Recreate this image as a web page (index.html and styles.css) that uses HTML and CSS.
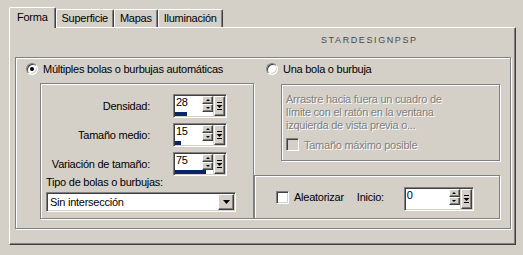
FILE: index.html
```html
<!DOCTYPE html>
<html lang="es">
<head>
    <meta charset="UTF-8">
    <title>Burbujas - Forma</title>
    <link rel="stylesheet" href="styles.css">
</head>
<body>
    <div class="dialog">
        <div class="tabs">
            <div class="tab active">Forma</div>
            <div class="tab">Superficie</div>
            <div class="tab">Mapas</div>
            <div class="tab">Iluminación</div>
        </div>

        <div class="panel">
            <div class="brand">STARDESIGNPSP</div>

            <div class="frame">
                <label class="radio r-multi"><span class="radio-dot on"></span>Múltiples bolas o burbujas automáticas</label>
                <label class="radio r-single"><span class="radio-dot"></span>Una bola o burbuja</label>

                <!-- Multiple bubbles -->
                <div class="group g-multi">
                    <div class="field-row">
                        <span class="lbl">Densidad:</span>
                        <div class="spin">
                            <div class="spin-main">
                                <div class="spin-top">
                                    <span class="spin-value">28</span>
                                    <span class="spin-arrows"><span class="btn"><i class="arr-up"></i></span><span class="btn"><i class="arr-down"></i></span></span>
                                </div>
                                <div class="spin-bar"><span style="width: 32%"></span></div>
                            </div>
                            <span class="btn spin-pop"><svg width="7" height="9" viewBox="0 0 7 9"><rect x="1" y="0" width="5" height="1"/><path d="M0.5 3h6l-3 3z"/><rect x="1" y="7" width="5" height="1"/></svg></span>
                        </div>
                    </div>
                    <div class="field-row">
                        <span class="lbl">Tamaño medio:</span>
                        <div class="spin">
                            <div class="spin-main">
                                <div class="spin-top">
                                    <span class="spin-value">15</span>
                                    <span class="spin-arrows"><span class="btn"><i class="arr-up"></i></span><span class="btn"><i class="arr-down"></i></span></span>
                                </div>
                                <div class="spin-bar"><span style="width: 16%"></span></div>
                            </div>
                            <span class="btn spin-pop"><svg width="7" height="9" viewBox="0 0 7 9"><rect x="1" y="0" width="5" height="1"/><path d="M0.5 3h6l-3 3z"/><rect x="1" y="7" width="5" height="1"/></svg></span>
                        </div>
                    </div>
                    <div class="field-row last">
                        <span class="lbl">Variación de tamaño:</span>
                        <div class="spin">
                            <div class="spin-main">
                                <div class="spin-top">
                                    <span class="spin-value">75</span>
                                    <span class="spin-arrows"><span class="btn"><i class="arr-up"></i></span><span class="btn"><i class="arr-down"></i></span></span>
                                </div>
                                <div class="spin-bar"><span style="width: 82%"></span></div>
                            </div>
                            <span class="btn spin-pop"><svg width="7" height="9" viewBox="0 0 7 9"><rect x="1" y="0" width="5" height="1"/><path d="M0.5 3h6l-3 3z"/><rect x="1" y="7" width="5" height="1"/></svg></span>
                        </div>
                    </div>
                    <div class="sub-lbl">Tipo de bolas o burbujas:</div>
                    <div class="combo">
                        <span class="combo-text">Sin intersección</span>
                        <span class="btn combo-btn"><svg width="7" height="4" viewBox="0 0 7 4"><path d="M0 0h7l-3.5 4z"/></svg></span>
                    </div>
                </div>

                <!-- Single bubble (disabled) -->
                <div class="group g-single disabled">
                    <p>Arrastre hacia fuera un cuadro de<br>límite con el ratón en la ventana<br>izquierda de vista previa o...</p>
                    <label class="check"><span class="check-box"></span>Tamaño máximo posible</label>
                </div>

                <!-- Random seed -->
                <div class="group g-random">
                    <label class="check"><span class="check-box"></span>Aleatorizar</label>
                    <span class="seed-lbl">Inicio:</span>
                    <div class="spin wide">
                        <div class="spin-main">
                            <div class="spin-top">
                                <span class="spin-value">0</span>
                                <span class="spin-arrows"><span class="btn"><i class="arr-up"></i></span><span class="btn"><i class="arr-down"></i></span></span>
                            </div>
                            <div class="spin-bar"><span style="width: 0%"></span></div>
                        </div>
                        <span class="btn spin-pop"><svg width="7" height="9" viewBox="0 0 7 9"><rect x="1" y="0" width="5" height="1"/><path d="M0.5 3h6l-3 3z"/><rect x="1" y="7" width="5" height="1"/></svg></span>
                    </div>
                </div>
            </div>
        </div>
    </div>
</body>
</html>
```

FILE: styles.css
```css
/* Global */
body {
    margin: 0;
    background-color: #d4d0c8;
    color: #000;
    font-family: "Liberation Sans", Arial, sans-serif;
    font-size: 11px;
    letter-spacing: -0.25px;
}

.dialog {
    padding: 7px 7px 0 9px;
    height: 255px;
    box-sizing: border-box;
}

/* Raised 3D button */
.btn {
    display: flex;
    align-items: center;
    justify-content: center;
    background-color: #d4d0c8;
    border: 1px solid;
    border-color: #fff #404040 #404040 #fff;
    box-shadow: inset -1px -1px 0 #808080;
    box-sizing: border-box;
}

/* Tabs */
.tabs {
    display: flex;
    align-items: flex-end;
    height: 20px;
}

.tab {
    height: 18px;
    line-height: 17px;
    padding: 0 5px;
    border-top: 1px solid #fff;
    border-left: 1px solid #fff;
    border-right: 1px solid #404040;
    border-radius: 2px 2px 0 0;
    box-shadow: inset -1px 0 0 #808080;
    box-sizing: border-box;
    white-space: nowrap;
}

.tab.active {
    position: relative;
    z-index: 1;
    height: 21px;
    line-height: 18px;
    padding: 0 7px;
    margin-bottom: -1px;
    background-color: #d4d0c8;
}

/* Tab page */
.panel {
    height: 218px;
    padding: 0 4px 0 5px;
    border-top: 1px solid #fff;
    border-left: 1px solid #fff;
    border-right: 1px solid #404040;
    border-bottom: 1px solid #404040;
    box-shadow: inset -1px -1px 0 #808080;
    box-sizing: border-box;
}

.brand {
    height: 29px;
    padding: 7px 0 0 306px;
    box-sizing: border-box;
    font-size: 9px;
    line-height: 10px;
    letter-spacing: 1.6px;
    color: #4a4a4a;
}

/* Etched frames */
.frame,
.group {
    border: 1px solid #808080;
    box-shadow: 1px 1px 0 #fff, inset 1px 1px 0 #fff;
    box-sizing: border-box;
}

.frame {
    height: 172px;
    padding: 5px 0 0 10px;
    display: grid;
    grid-template-columns: 14px 214px 12px 15px 219px;
    grid-template-rows: 20px 92px 44px;
}

/* Radio buttons */
.radio {
    display: flex;
    align-items: flex-start;
    gap: 5px;
    line-height: 12px;
    white-space: nowrap;
}

.r-multi { grid-column: 1 / 3; grid-row: 1; }
.r-single { grid-column: 4 / 6; grid-row: 1; }

.radio-dot {
    position: relative;
    flex: none;
    width: 12px;
    height: 12px;
    border: 1px solid;
    border-color: #808080 #fff #fff #808080;
    border-radius: 50%;
    background-color: #fff;
    box-shadow: inset 1px 1px 0 #404040, inset -1px -1px 0 #d4d0c8;
    box-sizing: border-box;
}

.radio-dot.on::after {
    content: "";
    position: absolute;
    left: 3px;
    top: 3px;
    width: 4px;
    height: 4px;
    border-radius: 50%;
    background-color: #000;
}

/* Check boxes */
.check {
    display: flex;
    align-items: center;
    gap: 5px;
    white-space: nowrap;
}

.check-box {
    flex: none;
    width: 13px;
    height: 13px;
    border: 1px solid;
    border-color: #808080 #fff #fff #808080;
    background-color: #fff;
    box-shadow: inset 1px 1px 0 #404040, inset -1px -1px 0 #d4d0c8;
    box-sizing: border-box;
}

/* Multiple bubbles group */
.g-multi {
    grid-column: 2;
    grid-row: 2 / 4;
    padding-top: 10px;
}

.field-row {
    display: flex;
    align-items: center;
    height: 24px;
    margin-bottom: 5px;
}

.field-row.last {
    margin-bottom: 0;
}

.lbl {
    width: 109px;
    margin-right: 23px;
    text-align: right;
    white-space: nowrap;
}

.sub-lbl {
    padding-left: 5px;
    line-height: 13px;
}

.combo {
    display: flex;
    align-items: center;
    width: 190px;
    height: 20px;
    margin: 3px 0 0 5px;
    padding: 1px;
    border: 1px solid;
    border-color: #808080 #fff #fff #808080;
    background-color: #fff;
    box-shadow: inset 1px 1px 0 #404040, inset -1px -1px 0 #d4d0c8;
    box-sizing: border-box;
}

.combo-text {
    flex: 1;
    padding-left: 2px;
}

.combo-btn {
    width: 16px;
    height: 16px;
}

/* Spin controls */
.spin {
    display: flex;
    width: 54px;
    height: 24px;
    padding: 1px;
    border: 1px solid;
    border-color: #808080 #fff #fff #808080;
    box-shadow: inset 1px 1px 0 #404040, inset -1px -1px 0 #d4d0c8;
    box-sizing: border-box;
    background-color: #d4d0c8;
}

.spin.wide {
    width: 70px;
    margin: 4px 0 0 20px;
}

.spin-main {
    flex: 1;
    display: flex;
    flex-direction: column;
}

.spin-top {
    flex: 1;
    display: flex;
}

.spin-value {
    flex: 1;
    background-color: #fff;
    line-height: 12px;
    padding-left: 1px;
}

.spin-arrows {
    width: 11px;
    display: flex;
    flex-direction: column;
}

.spin-arrows .btn {
    flex: 1;
}

.spin-bar {
    height: 4px;
    background-color: #fff;
}

.spin-bar span {
    display: block;
    height: 100%;
    background-color: #0a246a;
}

.spin-pop {
    width: 11px;
    margin-left: 1px;
}

.arr-up,
.arr-down {
    width: 0;
    height: 0;
    border-left: 2px solid transparent;
    border-right: 2px solid transparent;
}

.arr-up { border-bottom: 2px solid #000; }
.arr-down { border-top: 2px solid #000; }

/* Single bubble group (disabled) */
.g-single {
    grid-column: 5;
    grid-row: 2;
    height: 77px;
    margin-top: 1px;
    padding: 8px 0 0 4px;
}

.g-single p {
    margin: 0;
    line-height: 13px;
}

.g-single .check {
    margin-top: 6px;
}

.disabled {
    color: #808080;
}

.disabled p,
.disabled .check {
    text-shadow: 1px 1px 0 #fff;
}

.disabled .check-box {
    background-color: #d4d0c8;
}

/* Random group */
.g-random {
    grid-column: 3 / 6;
    grid-row: 3;
    display: flex;
    align-items: center;
    padding-left: 21px;
}

.seed-lbl {
    margin-left: 13px;
}
```
